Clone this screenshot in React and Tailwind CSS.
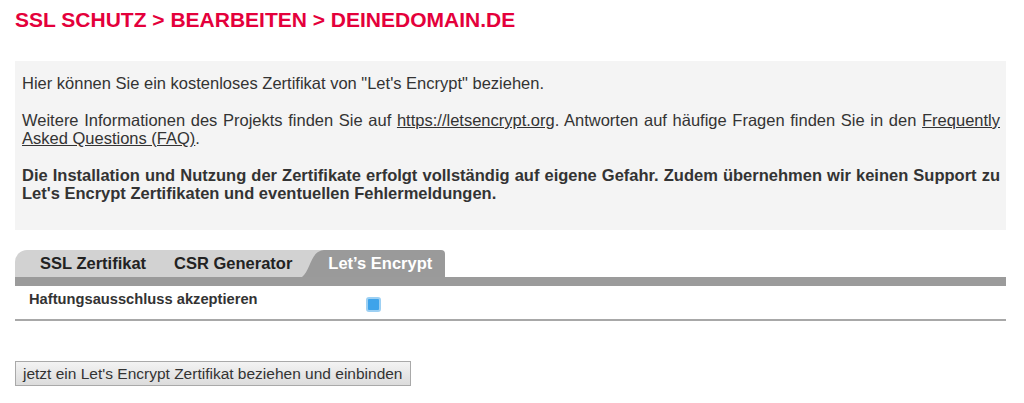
import React from 'react';

const Checkbox = () => (
  <span className="inline-flex items-center justify-center w-[15px] h-[15px] rounded-[3px] border-2 border-[#9dd0f3] bg-[#3ea3ea]" />
);

const TabSlant = () => (
  <svg width="22" height="27" viewBox="0 0 22 27" className="block shrink-0">
    <path d="M0 27 C7 22 9 5 17 1.5 Q19 0 22 0 L22 27 Z" fill="#9a9a9a" />
  </svg>
);

const App = () => {
  return (
    <div className="w-[1024px] h-[403px] bg-white text-[#333] overflow-hidden" style={{ fontFamily: '"Liberation Sans", Arial, sans-serif' }}>
      <div className="px-[15px] pt-[8px]">
        <h1 className="text-[21px] leading-[24px] font-bold text-[#e4003b]">SSL SCHUTZ &gt; BEARBEITEN &gt; DEINEDOMAIN.DE</h1>

        <div className="mt-[29px] w-[991px] bg-[#f4f4f4] pl-[7px] pr-[6px] pt-[13px] pb-[28px] text-[16.5px] leading-[18px] text-justify">
          <p className="mb-[19px]">Hier können Sie ein kostenloses Zertifikat von "Let's Encrypt" beziehen.</p>
          <p className="mb-[19px]">
            Weitere Informationen des Projekts finden Sie auf <a className="underline">https://letsencrypt.org</a>. Antworten auf häufige Fragen finden Sie in den <a className="underline">Frequently Asked Questions (FAQ)</a>.
          </p>
          <p className="font-bold">Die Installation und Nutzung der Zertifikate erfolgt vollständig auf eigene Gefahr. Zudem übernehmen wir keinen Support zu Let's Encrypt Zertifikaten und eventuellen Fehlermeldungen.</p>
        </div>

        <div className="mt-[20px] w-[991px]">
          <div className="flex items-end h-[27px]">
            <div className="flex items-center h-full bg-[#d2d2d2] rounded-tl-[12px] pl-[11px] text-[16.5px] font-bold text-[#222]">
              <span className="px-[14px]">SSL Zertifikat</span>
              <span className="pl-[14px] pr-[10px]">CSR Generator</span>
              <TabSlant />
            </div>
            <div className="flex items-center h-full bg-[#9a9a9a] rounded-tr-[4px] pl-[4px] pr-[13px] text-[16.5px] font-bold text-white">Let’s Encrypt</div>
          </div>
          <div className="h-[9px] bg-[#9b9b9b]" />
          <div className="flex items-start h-[35px] pt-[5px] border-b-2 border-[#a8a8a8]">
            <span className="w-[351px] pl-[14px] text-[14.7px] leading-[16px] font-bold text-[#333]">Haftungsausschluss akzeptieren</span>
            <span className="pt-[4px]"><Checkbox /></span>
          </div>
        </div>

        <button className="mt-[40px] h-[25px] px-[7px] border border-[#a9a9a9] bg-gradient-to-b from-[#f3f3f3] to-[#dcdcdc] text-[15.5px] leading-[18px] text-[#333]">
          jetzt ein Let's Encrypt Zertifikat beziehen und einbinden
        </button>
      </div>
    </div>
  );
};

export default App;
